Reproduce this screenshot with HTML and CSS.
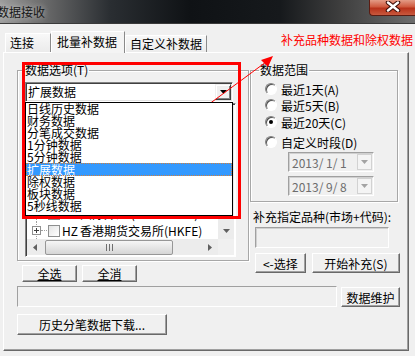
FILE: index.html
```html
<!DOCTYPE html>
<html lang="zh-CN">
<head>
    <meta charset="UTF-8">
    <title>数据接收</title>
    <link rel="stylesheet" href="styles.css">
</head>
<body>
    <div class="titlebar">
        <span class="title">数据接收</span>
        <div class="close">
            <svg width="16" height="11" viewBox="0 0 16 11">
                <path d="M3 1.5 L13 9.5 M13 1.5 L3 9.5" stroke="#3a0c06" stroke-width="4.5" stroke-linecap="round"/>
                <path d="M3 1.5 L13 9.5 M13 1.5 L3 9.5" stroke="#fff" stroke-width="2.4" stroke-linecap="round"/>
            </svg>
        </div>
    </div>

    <div class="tabs">
        <div class="tab tab-link">连接</div>
        <div class="tab tab-batch active">批量补数据</div>
        <div class="tab tab-custom">自定义补数据</div>
        <div class="note">补充品种数据和除权数据</div>
    </div>

    <div class="panel">
        <div class="top">
            <div class="col-left">
                <fieldset class="group group-opts">
                    <legend>数据选项(T)</legend>
                    <div class="combo">
                        <span class="combo-text">扩展数据</span>
                        <span class="combo-btn">
                            <svg width="7" height="4" viewBox="0 0 7 4"><polygon points="0,0 7,0 3.5,4" fill="#000"/></svg>
                        </span>
                        <ul class="droplist">
                            <li>日线历史数据</li>
                            <li>财务数据</li>
                            <li>分笔成交数据</li>
                            <li>1分钟数据</li>
                            <li>5分钟数据</li>
                            <li class="sel">扩展数据</li>
                            <li>除权数据</li>
                            <li>板块数据</li>
                            <li>5秒线数据</li>
                        </ul>
                    </div>
                    <div class="tree">
                        <div class="tree-body">
                            <div class="tree-rows">
                                <div class="tree-row"><span class="plus"></span><span class="dots"></span><span class="check"></span><span class="code">WH</span><span>国际外汇 (IDEAL PRO)</span></div>
                                <div class="tree-row"><span class="plus"></span><span class="dots"></span><span class="check"></span><span class="code">HZ</span><span>香港期货交易所(HKFE)</span></div>
                            </div>
                            <div class="vscroll">
                                <span class="sb-btn">
                                    <svg width="7" height="4" viewBox="0 0 7 4"><polygon points="0,0 7,0 3.5,4" fill="#606060"/></svg>
                                </span>
                            </div>
                        </div>
                        <div class="hscroll">
                            <span class="sb-btn">
                                <svg width="4" height="7" viewBox="0 0 4 7"><polygon points="4,0 4,7 0,3.5" fill="#606060"/></svg>
                            </span>
                            <span class="thumb">
                                <svg width="7" height="7" viewBox="0 0 7 7"><path d="M0.5 0 V7 M3.5 0 V7 M6.5 0 V7" stroke="#6f6f6f" stroke-width="1"/></svg>
                            </span>
                            <span class="track"></span>
                            <span class="sb-btn">
                                <svg width="4" height="7" viewBox="0 0 4 7"><polygon points="0,0 0,7 4,3.5" fill="#606060"/></svg>
                            </span>
                            <span class="corner"></span>
                        </div>
                    </div>
                </fieldset>
                <div class="btn-row">
                    <button class="btn btn-sel"><u>全选</u></button>
                    <button class="btn btn-sel"><u>全消</u></button>
                </div>
            </div>

            <div class="col-right">
                <fieldset class="group group-range">
                    <legend>数据范围</legend>
                    <div class="radio"><span class="dot"></span>最近1天(A)</div>
                    <div class="radio"><span class="dot"></span>最近5天(B)</div>
                    <div class="radio on"><span class="dot"></span>最近20天(C)</div>
                    <div class="radio"><span class="dot"></span>自定义时段(D)</div>
                    <div class="date">
                        <span class="date-text">2013/ 1/ 1</span>
                        <span class="date-btn"><svg width="7" height="4" viewBox="0 0 7 4"><polygon points="0,0 7,0 3.5,4" fill="#a3a3a3"/></svg></span>
                    </div>
                    <div class="date">
                        <span class="date-text">2013/ 9/ 8</span>
                        <span class="date-btn"><svg width="7" height="4" viewBox="0 0 7 4"><polygon points="0,0 7,0 3.5,4" fill="#a3a3a3"/></svg></span>
                    </div>
                </fieldset>
                <div class="spec-label">补充指定品种(市场+代码):</div>
                <div class="spec-input"></div>
                <div class="btn-row btn-row-right">
                    <button class="btn btn-pick">&lt;-选择</button>
                    <button class="btn btn-start">开始补充(S)</button>
                </div>
            </div>
        </div>

        <div class="status-row">
            <div class="status"></div>
            <button class="btn btn-maint">数据维护</button>
        </div>
        <button class="btn btn-download">历史分笔数据下载...</button>
    </div>

    <svg class="annot" width="415" height="356" viewBox="0 0 415 356">
        <rect x="23.5" y="63.5" width="216" height="154" fill="none" stroke="#ff0000" stroke-width="3"/>
        <line x1="197" y1="113" x2="266" y2="62" stroke="#ff0000" stroke-width="1"/>
        <polygon points="273,56 261,60 268,67" fill="#ff0000"/>
    </svg>
</body>
</html>
```

FILE: styles.css
```css
* {
    box-sizing: border-box;
}
body {
    margin: 0;
    width: 415px;
    height: 356px;
    overflow: hidden;
    position: relative;
    background: #f0f0f0;
    font-family: "Noto Sans CJK SC", sans-serif;
    font-size: 12px;
    color: #000;
}

/* window title */
.titlebar {
    height: 24px;
    display: flex;
    align-items: center;
    background: linear-gradient(to right, #9d9d9d 0, #6e6e6e 40px, #2a2e32 110px, #0f1215 190px, #16191c 280px, #3e3e3e 340px, #6d6d6d 415px);
    border-bottom: 1px solid #3a3a3a;
}
.title {
    margin-left: -3px;
    line-height: 14px;
    color: #151515;
    text-shadow: 0 0 6px rgba(235, 235, 235, 0.8);
}
.close {
    margin-left: auto;
    align-self: flex-start;
    width: 46px;
    height: 16px;
    padding-top: 1px;
    display: flex;
    justify-content: center;
    align-items: flex-start;
    border-left: 1px solid #5b1c12;
    border-bottom: 1px solid #5b1c12;
    border-radius: 0 0 0 4px;
    background: linear-gradient(#e39b86, #cf5a3f 45%, #b8321a 55%, #c8593e);
}

/* tabs */
.tabs {
    height: 28px;
    display: flex;
    align-items: flex-end;
    padding-left: 5px;
}
.tab {
    padding-left: 4px;
    border: 1px solid;
    border-color: #fff #8a8a8a transparent #fff;
    border-bottom: none;
    background: linear-gradient(#f8f8f8, #ebebeb);
    white-space: nowrap;
}
.tab-link {
    width: 46px;
    height: 19px;
    line-height: 18px;
}
.tab-batch {
    width: 74px;
    height: 22px;
    line-height: 20px;
    padding-left: 5px;
}
.tab-custom {
    width: 82px;
    height: 17px;
    line-height: 16px;
}
.tab.active {
    position: relative;
    z-index: 1;
    margin-bottom: -1px;
    background: #f4f4f4;
}
.note {
    margin-left: auto;
    margin-right: 2px;
    margin-top: 9px;
    align-self: flex-start;
    line-height: 14px;
    color: #ff0000;
    white-space: nowrap;
}

/* page */
.panel {
    margin-left: 3px;
    width: 406px;
    height: 299px;
    padding: 11px 0 0 13px;
    border: 1px solid;
    border-color: #fff #696969 #696969 #fff;
    box-shadow: inset -1px -1px 0 #a0a0a0;
}
.top {
    display: flex;
}
.col-left {
    width: 232px;
}
.col-right {
    width: 150px;
    margin-left: 1px;
}

.group {
    margin: 0;
    min-width: 0;
    border: 1px solid #a7a7a7;
    box-shadow: 1px 1px 0 #fff, inset 1px 1px 0 #fff;
}
.group legend {
    height: 12px;
    line-height: 12px;
    padding: 0 1px;
    white-space: nowrap;
}
.group-opts {
    padding: 6px 0 3px 7px;
}
.group-opts legend {
    margin-left: -1px;
}
.group-range {
    width: 148px;
    padding: 5px 0 5px 14px;
}
.group-range legend {
    margin-left: -6px;
}

/* combo box + open list */
.combo {
    position: relative;
    width: 208px;
    height: 20px;
    display: flex;
    align-items: center;
    background: #fff;
    border: 1px solid;
    border-color: #828282 #fff #fff #828282;
    box-shadow: inset 1px 1px 0 #404040, inset -1px -1px 0 #e3e3e3;
}
.combo-text {
    flex: 1;
    padding-left: 2px;
    line-height: 16px;
}
.combo-btn {
    width: 16px;
    height: 16px;
    margin-right: 1px;
    display: flex;
    justify-content: center;
    align-items: center;
    background: #f0f0f0;
    border: 1px solid;
    border-color: #f0f0f0 #404040 #404040 #f0f0f0;
    box-shadow: inset 1px 1px 0 #fff, inset -1px -1px 0 #808080;
}
.droplist {
    position: absolute;
    left: -1px;
    top: 19px;
    z-index: 2;
    width: 208px;
    height: 114px;
    margin: 0;
    padding: 0;
    list-style: none;
    background: #fff;
    border: 1px solid #000;
}
.droplist li {
    height: 12px;
    line-height: 12px;
    padding-left: 1px;
    white-space: nowrap;
}
.droplist li.sel {
    height: 13px;
    line-height: 13px;
    background: #3399ff;
    color: #fff;
    outline: 1px dotted #d08040;
    outline-offset: -1px;
}

/* tree */
.tree {
    margin-top: 1px;
    width: 211px;
    height: 154px;
    padding: 1px;
    display: flex;
    flex-direction: column;
    background: #fff;
    border: 1px solid;
    border-color: #828282 #fff #fff #828282;
    box-shadow: inset 1px 1px 0 #404040;
}
.tree-body {
    flex: 1;
    min-height: 0;
    display: flex;
}
.tree-rows {
    flex: 1;
    min-width: 0;
    display: flex;
    flex-direction: column;
    justify-content: flex-end;
    overflow: hidden;
}
.tree-row {
    height: 17px;
    flex-shrink: 0;
    display: flex;
    align-items: center;
    white-space: nowrap;
    background: repeating-linear-gradient(to bottom, #a0a0a0 0 1px, transparent 1px 2px) no-repeat 9px 0 / 1px 100%;
}
.plus {
    width: 9px;
    height: 9px;
    margin-left: 5px;
    border: 1px solid #919191;
    background: #fff linear-gradient(#404040, #404040) no-repeat center / 5px 1px;
    position: relative;
}
.plus::after {
    content: "";
    position: absolute;
    left: 3px;
    top: 1px;
    width: 1px;
    height: 5px;
    background: #404040;
}
.dots {
    width: 6px;
    border-top: 1px dotted #a0a0a0;
}
.check {
    width: 12px;
    height: 12px;
    margin-left: 1px;
    border: 1px solid #8e8f8f;
    background: linear-gradient(135deg, #e4e4e4, #fff);
}
.code {
    width: 18px;
    margin-left: 2px;
}

/* scrollbars */
.vscroll {
    width: 16px;
    display: flex;
    flex-direction: column;
    justify-content: flex-end;
    background: #ececec;
}
.hscroll {
    height: 16px;
    display: flex;
    align-items: center;
    background: #ececec;
}
.sb-btn {
    width: 16px;
    height: 16px;
    flex-shrink: 0;
    display: flex;
    justify-content: center;
    align-items: center;
}
.thumb {
    width: 128px;
    height: 15px;
    margin-left: 2px;
    display: flex;
    justify-content: center;
    align-items: center;
    border: 1px solid #979797;
    border-radius: 2px;
    background: linear-gradient(#f6f6f6, #e6e6e6 50%, #d6d6d6);
}
.track {
    flex: 1;
}
.corner {
    width: 16px;
    height: 16px;
    background: #f0f0f0;
}

/* buttons */
.btn {
    padding: 0;
    font-family: inherit;
    font-size: 12px;
    color: #000;
    background: #f0f0f0;
    border: 1px solid;
    border-color: #fff #696969 #696969 #fff;
    box-shadow: inset -1px -1px 0 #a0a0a0;
    white-space: nowrap;
}
.btn-row {
    display: flex;
    gap: 5px;
    margin-top: 4px;
    padding-left: 5px;
}
.btn-sel {
    width: 55px;
    height: 17px;
    line-height: 14px;
}
.btn-row-right {
    gap: 6px;
    margin-top: 5px;
}
.btn-pick {
    width: 51px;
    height: 20px;
}
.btn-start {
    width: 89px;
    height: 20px;
}

/* range */
.radio {
    height: 16px;
    display: flex;
    align-items: center;
    gap: 4px;
    white-space: nowrap;
}
.radio:nth-of-type(3) {
    margin-top: 1px;
}
.radio:nth-of-type(4) {
    margin-top: 4px;
}
.dot {
    width: 12px;
    height: 12px;
    display: flex;
    justify-content: center;
    align-items: center;
    border-radius: 50%;
    border: 1px solid;
    border-color: #808080 #fff #fff #808080;
    background: #fff;
    box-shadow: inset 1px 1px 0 #505050;
}
.radio.on .dot::after {
    content: "";
    width: 4px;
    height: 4px;
    border-radius: 50%;
    background: #000;
}
.date {
    width: 86px;
    height: 20px;
    margin: 2px 0 0 23px;
    display: flex;
    align-items: center;
    color: #6d6d6d;
    border: 1px solid;
    border-color: #a0a0a0 #fff #fff #a0a0a0;
    box-shadow: inset 1px 1px 0 #d0d0d0;
}
.date + .date {
    margin-top: 4px;
}
.date-text {
    flex: 1;
    padding-left: 3px;
    white-space: pre;
}
.date-btn {
    width: 15px;
    height: 16px;
    margin-right: 1px;
    display: flex;
    justify-content: center;
    align-items: center;
    border: 1px solid #d2d2d2;
    background: #f4f4f4;
}

.spec-label {
    margin-top: 8px;
    padding-left: 3px;
    line-height: 14px;
    white-space: nowrap;
}
.spec-input {
    width: 134px;
    height: 21px;
    margin: 3px 0 0 5px;
    border: 1px solid;
    border-color: #a0a0a0 #fff #fff #a0a0a0;
    box-shadow: inset 1px 1px 0 #d0d0d0;
}

/* bottom */
.status-row {
    display: flex;
    margin-top: 4px;
}
.status {
    width: 320px;
    height: 21px;
    border: 1px solid;
    border-color: #a0a0a0 #fff #fff #a0a0a0;
}
.btn-maint {
    width: 59px;
    height: 20px;
    margin: 1px 0 0 4px;
}
.btn-download {
    display: block;
    width: 150px;
    height: 21px;
    margin-top: 7px;
}

.annot {
    position: absolute;
    left: 0;
    top: 0;
    pointer-events: none;
}
```
